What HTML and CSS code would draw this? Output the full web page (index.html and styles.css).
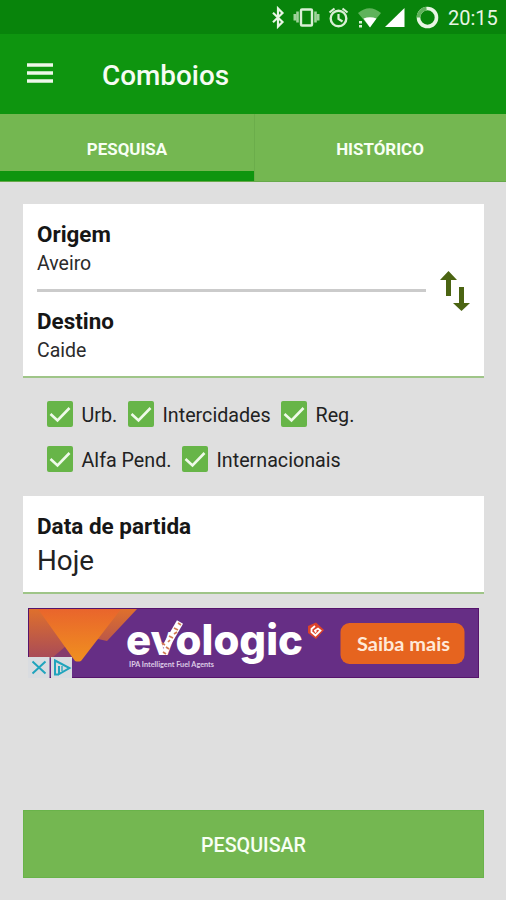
FILE: index.html
```html
<!DOCTYPE html>
<html lang="pt">
<head>
<meta charset="utf-8">
<title>Comboios</title>
<link rel="stylesheet" href="styles.css">
</head>
<body>
<div class="status">
  <svg class="status-icons" viewBox="0 0 176 34">
    <path d="M4 12.800L13.500 22L9 26.500V8.500L13.500 13L4 22.200" fill="none" stroke="#e8f5e4" stroke-width="2.200"/>
    <rect x="32" y="9.500" width="11" height="16" rx="1" fill="none" stroke="#d9efd5" stroke-width="2.400"/>
    <path d="M28.500 11.500v11M46.500 11.500v11M25.800 14v6.500M49.200 14v6.500" stroke="#9fd39a" stroke-width="2.600"/>
    <circle cx="69.500" cy="18.500" r="7.800" fill="none" stroke="#d9efd5" stroke-width="2.400"/>
    <path d="M69.500 14v5l4 2.500M60.500 12.500l5-4M78.500 12.500l-5-4" fill="none" stroke="#d9efd5" stroke-width="2.200"/>
    <path d="M89 13Q100.500 3.500 112 13L100.500 27Z" fill="#5fb35b"/>
    <path d="M94.500 18.500Q101 16 107.500 18.500L101 27.500Z" fill="#fff"/>
    <path d="M90 21h3v2.500h-3zM90 25h3v2.500h-3z" fill="#d9efd5"/>
    <path d="M116 27L135.500 8V27Z" fill="#fff"/>
    <circle cx="158.500" cy="17.500" r="9" fill="none" stroke="#e8f5e4" stroke-width="3.600"/>
    <path d="M149.500 17.500a9 9 0 0 1 8-9" fill="none" stroke="#5fb35b" stroke-width="3.800"/>
  </svg>
  <span class="clock">20:15</span>
</div>
<header class="bar">
  <svg class="menu" viewBox="0 0 26 20"><path d="M0 2h26M0 10h26M0 18h26" stroke="#eef8ea" stroke-width="3.300"/></svg>
  <h1>Comboios</h1>
</header>
<nav class="tabs">
  <div class="tab active"><span>PESQUISA</span></div>
  <div class="tab"><span>HISTÓRICO</span></div>
</nav>
<main>
  <section class="card route">
    <div class="stops">
      <div class="label">Origem</div>
      <div class="value">Aveiro</div>
      <hr>
      <div class="label">Destino</div>
      <div class="value">Caide</div>
    </div>
    <svg class="swap" viewBox="0 0 30 41"><path d="M8.500 0L17 9H11V25H6V9H0ZM19 16h5V32h6L21.500 40L13 32h6Z" fill="#4b6412"/></svg>
  </section>
  <section class="filters">
    <div class="line">
      <svg class="check" viewBox="0 0 26 26"><rect width="26" height="26" rx="2" fill="#67b548"/><path d="M3.500 13l7 6.500L22.500 7" fill="none" stroke="#effae9" stroke-width="2.600"/></svg><span class="f-urb">Urb.</span>
      <svg class="check" viewBox="0 0 26 26"><rect width="26" height="26" rx="2" fill="#67b548"/><path d="M3.500 13l7 6.500L22.500 7" fill="none" stroke="#effae9" stroke-width="2.600"/></svg><span class="f-inter">Intercidades</span>
      <svg class="check" viewBox="0 0 26 26"><rect width="26" height="26" rx="2" fill="#67b548"/><path d="M3.500 13l7 6.500L22.500 7" fill="none" stroke="#effae9" stroke-width="2.600"/></svg><span>Reg.</span>
    </div>
    <div class="line">
      <svg class="check" viewBox="0 0 26 26"><rect width="26" height="26" rx="2" fill="#67b548"/><path d="M3.500 13l7 6.500L22.500 7" fill="none" stroke="#effae9" stroke-width="2.600"/></svg><span class="f-alfa">Alfa Pend.</span>
      <svg class="check" viewBox="0 0 26 26"><rect width="26" height="26" rx="2" fill="#67b548"/><path d="M3.500 13l7 6.500L22.500 7" fill="none" stroke="#effae9" stroke-width="2.600"/></svg><span>Internacionais</span>
    </div>
  </section>
  <section class="card date">
    <div class="label">Data de partida</div>
    <div class="today">Hoje</div>
  </section>
  <svg class="ad" viewBox="0 0 451 70">
    <defs>
      <linearGradient id="g1" x1="0" y1="0" x2="0" y2="1"><stop offset="0" stop-color="#e9652c"/><stop offset="1" stop-color="#f0901f"/></linearGradient>
      <linearGradient id="g2" x1="0" y1="0" x2="0" y2="1"><stop offset="0" stop-color="#df702c"/><stop offset="1" stop-color="#a84b58"/></linearGradient>
    </defs>
    <rect x=".5" y=".5" width="450" height="69" fill="#662e85" stroke="#56146b"/>
    <path d="M1 1H109L79 33L70 31L38 50H1Z" fill="url(#g2)"/>
    <path d="M38 38L52 50H24Z" fill="#843b6d"/>
    <path d="M10 1H93L53 53Q50 54 47 53Z" fill="url(#g1)"/>
    <text class="brand" x="98" y="47" textLength="177" lengthAdjust="spacingAndGlyphs">evologic</text>
    <path d="M137 40L152 14" fill="none" stroke="#fff" stroke-width="7"/>
    <path d="M134 35l3 2M138 39l3 2M141 28l4 2M146 20l4 2M135 44l3 2M140 34l2-2M149 24l-3 2M150 15l3 2" stroke="#d27b53" stroke-width="1.700"/>
    <text class="tagline" x="101" y="58.500" textLength="85" lengthAdjust="spacingAndGlyphs">IPA Intelligent Fuel Agents</text>
    <path d="M288 14.500L296 22L288 31L280 25V18Z" fill="#dc432b"/>
    <path d="M287 18l-3.500 3v3l4 3.500 5-5-2.500-2-3 2 1 2" fill="none" stroke="#fff" stroke-width="1.800"/>
    <rect x="312.500" y="15" width="124" height="41" rx="9" fill="#e6641f"/>
    <text class="cta" x="329" y="42.500" textLength="93" lengthAdjust="spacingAndGlyphs">Saiba mais</text>
    <path d="M0 49h21.500v21H0zM23 49h21v21H23z" fill="#d9dce0"/>
    <path d="M4.500 53.500l13 12M17.500 53.500l-13 12M31 66.500h-4V52.500L41.500 60L31 66V58" fill="none" stroke="#20a4bd" stroke-width="2"/>
    <path d="M34 58v5" stroke="#20a4bd" stroke-width="1.300"/>
  </svg>
  <button class="search"><span>PESQUISAR</span></button>
</main>
</body>
</html>
```
FILE: styles.css
```css
* { box-sizing: border-box; }
body { margin: 0; width: 506px; height: 900px; overflow: hidden; display: flex; flex-direction: column; background: #dfdfdf; font-family: Roboto, "Liberation Sans", sans-serif; color: #161616; }
svg { display: block; flex: none; }
.status { height: 34px; background: #08840b; display: flex; align-items: center; justify-content: flex-end; padding-right: 8px; }
.status-icons { width: 176px; height: 34px; margin-right: 3px; }
.clock { width: 50px; font-size: 20px; line-height: 32px; color: #e8f5e4; padding-top: 1px; white-space: nowrap; }
.bar { height: 80px; background: #0e950f; display: flex; align-items: center; padding: 1px 0 0 27px; }
.menu { width: 26px; height: 20px; margin-top: -3px; }
h1 { margin: 2px 0 0 49px; font-size: 27.900px; line-height: 34px; font-weight: 500; color: #f6fcf3; }
.tabs { height: 68px; display: grid; grid-template-columns: 254px 1fr; background: #74b751; border-bottom: 1px solid #67a94a; }
.tab { display: flex; align-items: center; justify-content: center; font-size: 16.900px; font-weight: 700; color: #f8fff4; height: 67px; padding-top: 3px; }
.active { border-bottom: 10px solid #0e950f; padding-top: 13px; box-shadow: 1px 0 #6bad4b; }
main { flex: 1; padding: 22px 22px 22px 23px; display: flex; flex-direction: column; }
.card { background: #fff; border-bottom: 2px solid #9fc588; padding-left: 14px; flex: none; }
.route { height: 174px; display: flex; }
.stops { width: 389px; padding-top: 16px; }
.label { font-size: 22.400px; font-weight: 700; line-height: 29px; }
.value { font-size: 19.500px; line-height: 28px; padding-top: 1px; color: #2b2b2b; }
hr { border: 0; height: 3px; background: #cbcbcb; margin: 10.500px 0 15px; }
.swap { width: 30px; height: 41px; margin: 67px 0 0 14px; }
.filters { height: 118px; padding: 23px 0 0 23.500px; display: flex; flex-direction: column; gap: 19px; }
.line { height: 26px; display: flex; align-items: center; font-size: 19.700px; color: #222; white-space: nowrap; }
.check { width: 26px; height: 26px; margin-right: 9px; }
.line span { padding-top: 2px; }
.f-urb { width: 46px; }
.f-inter { width: 118px; }
.f-alfa { width: 100px; }
.date { height: 98px; padding-top: 16px; }
.date .label { font-size: 22.500px; }
.today { font-size: 27.800px; line-height: 36px; margin-top: 2px; color: #222; }
.ad { width: 451px; height: 70px; margin: 14px 0 0 5px; }
.brand { font: 800 42px Inter, sans-serif; fill: #fff; }
.tagline { font: 700 7px Lato, sans-serif; fill: #ddcce5; }
.cta { font: 700 18px Lato, sans-serif; fill: #ffe9d8; }
.search { margin-top: auto; height: 68px; flex: none; border: 1px solid #69b34a; background: #74b751; color: #f8fff4; font: 500 19.700px Roboto, sans-serif; padding: 2px 0 0; }
```
